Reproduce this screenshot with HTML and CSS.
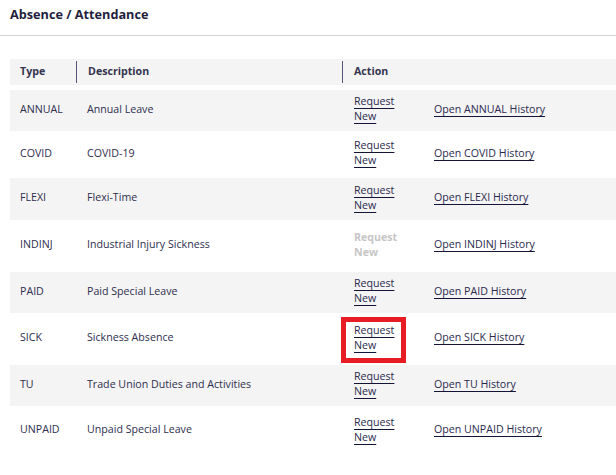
FILE: index.html
```html
<!DOCTYPE html>
<html>
<head>
<meta charset="utf-8">
<link rel="stylesheet" href="styles.css">
</head>
<body>
<header class="page-head">
  <h1 class="page-title">Absence / Attendance</h1>
</header>
<main class="content">
  <table class="grid">
    <colgroup>
      <col class="c-type"><col class="c-desc"><col class="c-req"><col class="c-hist">
    </colgroup>
    <thead>
      <tr>
        <th><span class="th-inner first">Type</span></th>
        <th><span class="th-inner">Description</span></th>
        <th colspan="2"><span class="th-inner">Action</span></th>
      </tr>
    </thead>
    <tbody>
      <tr class="alt h41">
        <td>ANNUAL</td><td>Annual Leave</td>
        <td class="req"><a class="lnk" href="#">Request<br>New</a></td>
        <td class="hist"><a class="lnk" href="#">Open ANNUAL History</a></td>
      </tr>
      <tr class="h47">
        <td>COVID</td><td>COVID-19</td>
        <td class="req"><a class="lnk" href="#">Request<br>New</a></td>
        <td class="hist"><a class="lnk" href="#">Open COVID History</a></td>
      </tr>
      <tr class="alt h42">
        <td>FLEXI</td><td>Flexi-Time</td>
        <td class="req"><a class="lnk" href="#">Request<br>New</a></td>
        <td class="hist"><a class="lnk" href="#">Open FLEXI History</a></td>
      </tr>
      <tr class="h52">
        <td>INDINJ</td><td>Industrial Injury Sickness</td>
        <td class="req"><span class="disabled">Request<br>New</span></td>
        <td class="hist"><a class="lnk" href="#">Open INDINJ History</a></td>
      </tr>
      <tr class="alt h41">
        <td>PAID</td><td>Paid Special Leave</td>
        <td class="req"><a class="lnk" href="#">Request<br>New</a></td>
        <td class="hist"><a class="lnk" href="#">Open PAID History</a></td>
      </tr>
      <tr class="h52">
        <td>SICK</td><td>Sickness Absence</td>
        <td class="req highlight"><a class="lnk" href="#">Request<br>New</a><span class="mark"></span></td>
        <td class="hist"><a class="lnk" href="#">Open SICK History</a></td>
      </tr>
      <tr class="alt h41">
        <td>TU</td><td>Trade Union Duties and Activities</td>
        <td class="req"><a class="lnk" href="#">Request<br>New</a></td>
        <td class="hist"><a class="lnk" href="#">Open TU History</a></td>
      </tr>
      <tr class="h50">
        <td>UNPAID</td><td>Unpaid Special Leave</td>
        <td class="req"><a class="lnk" href="#">Request<br>New</a></td>
        <td class="hist"><a class="lnk" href="#">Open UNPAID History</a></td>
      </tr>
    </tbody>
  </table>
</main>
</body>
</html>
```
FILE: styles.css
```css
html, body {
  margin: 0;
  padding: 0;
  background: #ffffff;
}
body {
  font-family: "Open Sans", "Noto Sans", sans-serif;
  font-size: 10.65px;
  color: #2e2e4e;
  width: 616px;
  overflow: hidden;
}
.page-head {
  height: 35px;
  border-bottom: 1px solid #d2d2d8;
  padding: 0 10px;
  box-sizing: content-box;
}
.page-title {
  margin: 0;
  padding-top: 6px;
  font-size: 12.7px;
  line-height: 16px;
  font-weight: 700;
  color: #1f1f3d;
}
.content {
  padding: 23px 0 0 10px;
}
.grid {
  width: 606px;
  border-collapse: separate;
  border-spacing: 0;
  table-layout: fixed;
}
.c-type { width: 66px; }
.c-desc { width: 266px; }
.c-req { width: 80px; }
.c-hist { width: auto; }
.grid th {
  background: #f4f4f4;
  height: 26px;
  padding: 2px 0 2px 0;
  box-sizing: border-box;
  text-align: left;
  font-weight: 700;
  color: #34344f;
  border-bottom: 5px solid #ffffff;
  background-clip: padding-box;
  vertical-align: middle;
}
.th-inner {
  display: block;
  border-left: 1px solid #55557a;
  padding-left: 11px;
  line-height: 20px;
  padding-bottom: 2px;
}
.th-inner.first {
  border-left: none;
  padding-left: 10px;
}
.grid td {
  padding: 0 0 3px 11px;
  vertical-align: middle;
  line-height: 15px;
}
.grid td:first-child {
  padding-left: 10px;
}
.grid td.req {
  padding-left: 12px;
}
.grid td.hist {
  padding-left: 12px;
}
.alt td {
  background: #f4f4f4;
}
.h41 td { height: 38px; }
.h42 td { height: 39px; }
.h47 td { height: 44px; }
.h50 td { height: 47px; }
.h52 td { height: 49px; }
.lnk {
  color: #2a2a4e;
  text-decoration: underline;
  text-decoration-color: #141438;
  text-decoration-thickness: 1px;
  text-underline-offset: 3px;
}
.disabled {
  color: #c6c6c6;
  font-weight: 700;
}
.highlight {
  position: relative;
}
.mark {
  position: absolute;
  left: -1px;
  top: 4px;
  width: 65px;
  height: 46px;
  box-sizing: border-box;
  border: 5px solid #e81c24;
  pointer-events: none;
}
```
